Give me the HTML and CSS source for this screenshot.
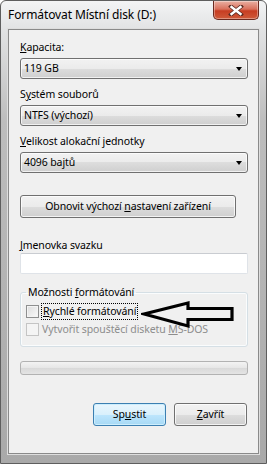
FILE: index.html
```html
<!DOCTYPE html>
<html lang="cs">
<head>
<meta charset="utf-8">
<title>Formátovat Místní disk (D:)</title>
<link rel="stylesheet" href="styles.css">
</head>
<body>
<div class="window">
  <div class="titlebar">
    <span class="title">Formátovat Místní disk (D:)</span>
    <div class="close">
      <svg width="16" height="11" viewBox="0 0 16 11"><path d="M3 1.5 L13 9.5 M13 1.5 L3 9.5" stroke="#5a2a22" stroke-width="4" stroke-linecap="square"/><path d="M3.5 2 L12.5 9 M12.5 2 L3.5 9" stroke="#fff" stroke-width="2.4" stroke-linecap="square"/></svg>
    </div>
  </div>
  <div class="client">
    <div class="label first"><u>K</u>apacita:</div>
    <div class="combo"><span>119 GB</span><i class="caret"></i></div>
    <div class="label">S<u>y</u>stém souborů</div>
    <div class="combo"><span>NTFS (výchozí)</span><i class="caret"></i></div>
    <div class="label"><u>V</u>elikost alokační jednotky</div>
    <div class="combo"><span>4096 bajtů</span><i class="caret"></i></div>
    <div class="btn restore"><span>Obnovit výchozí <u>n</u>astavení zařízení</span></div>
    <div class="label vol"><u>J</u>menovka svazku</div>
    <div class="input"></div>
    <fieldset class="group">
      <legend>Možnosti <u>f</u>ormátování</legend>
      <div class="check">
        <span class="box"></span><span class="focus"><u>R</u>ychlé formátování</span>
      </div>
      <div class="check disabled">
        <span class="box"></span><span>Vytvořit spouštěcí disketu <u>M</u>S-DOS</span>
      </div>
    </fieldset>
    <div class="progress"></div>
    <div class="actions">
      <div class="btn default"><span>Sp<u>u</u>stit</span></div>
      <div class="btn"><span><u>Z</u>avřít</span></div>
    </div>
  </div>
  <svg class="pointer" width="100" height="30" viewBox="0 0 100 30"><polygon points="3,14 47,3 47,8.5 91,8.5 91,19.5 47,19.5 47,26" fill="none" stroke="#000" stroke-width="3.2" stroke-linejoin="miter"/></svg>
</div>
</body>
</html>
```

FILE: styles.css
```css
* { box-sizing: border-box; }
html, body { margin: 0; padding: 0; background: #fff; }
body {
  font-family: "Noto Sans", "DejaVu Sans", sans-serif;
  font-size: 10.5px;
  letter-spacing: -0.1px;
  line-height: 15px;
  color: #000;
}
u { text-decoration: underline; text-underline-offset: 1px; }

.window {
  position: relative;
  width: 267px;
  height: 464px;
  border: 1px solid #5e5e5e;
  border-radius: 6px 6px 0 0;
  background: linear-gradient(#f3f4f5 0, #e2e3e4 28px, #bdbdbd 120px, #a9a9a9 100%);
  padding: 0 7px 9px;
  display: flex;
  flex-direction: column;
}

.titlebar {
  height: 28px;
  display: flex;
  justify-content: space-between;
  align-items: flex-start;
}
.title {
  margin-top: 6px;
  font-size: 12px;
  letter-spacing: -0.1px;
  line-height: 16px;
  color: #000;
}
.close {
  width: 46px;
  height: 19px;
  border: 1px solid #6b2a20;
  border-top: none;
  border-radius: 0 0 5px 5px;
  background: linear-gradient(#eab0a3 0, #d9705c 45%, #c73d22 55%, #cf5a3a 100%);
  box-shadow: inset 0 0 0 1px rgba(255,255,255,0.35);
  display: flex;
  align-items: center;
  justify-content: center;
}

.client {
  flex: 1;
  border: 1px solid #8a8a8a;
  box-shadow: 0 0 0 1px #dedede;
  background: #f0f0f0;
  padding: 10px 10px 0 11px;
  display: flex;
  flex-direction: column;
}

.label { height: 15px; margin-top: 8px; }
.label.first { margin-top: 0; }
.label.vol { margin-top: 20px; }

.combo {
  margin-top: 3px;
  height: 21px;
  border: 1px solid #707070;
  border-radius: 3px;
  background: linear-gradient(#f2f2f2 0, #ebebeb 50%, #dddddd 50%, #cfcfcf 100%);
  box-shadow: inset 0 0 0 1px rgba(255,255,255,0.7);
  display: flex;
  align-items: center;
  justify-content: space-between;
  padding: 0 5px 0 3px;
}
.caret {
  width: 0; height: 0;
  border-left: 3.5px solid transparent;
  border-right: 3.5px solid transparent;
  border-top: 4px solid #000;
}

.btn {
  height: 23px;
  border: 1px solid #707070;
  border-radius: 3px;
  background: linear-gradient(#f2f2f2 0, #ebebeb 50%, #dddddd 50%, #cfcfcf 100%);
  box-shadow: inset 0 0 0 1px rgba(255,255,255,0.75);
  display: flex;
  align-items: center;
  justify-content: center;
}
.btn.restore { margin-top: 22px; width: 216px; }

.input {
  height: 21px;
  border: 1px solid #dfe3e8;
  border-top-color: #c9ccd1;
  border-radius: 2px;
  background: #fff;
}

.group {
  margin: 11px 0 0;
  padding: 0 5px 9px;
  border: 1px solid #d5dfe5;
  border-radius: 3px;
  box-shadow: inset 0 0 0 1px #fafcfd;
  min-width: 0;
}
.group legend {
  padding: 0 2px;
  line-height: 15px;
}
.check {
  display: flex;
  align-items: center;
  height: 16px;
  margin-top: 3px;
}
.check + .check { margin-top: 2px; }
.box {
  width: 13px;
  height: 13px;
  border: 1px solid #8e8f8f;
  background: linear-gradient(135deg, #dcdcdc, #fbfbfb);
  box-shadow: inset 0 0 0 1px #f4f4f4;
  margin-right: 3px;
  flex: none;
}
.focus {
  outline: 1px dotted #000;
  padding: 0 1px;
}
.check.disabled { color: #8d8d8d; }
.check.disabled .box {
  border-color: #c4c4c4;
  background: #f4f4f4;
  box-shadow: none;
}

.progress {
  margin-top: 14px;
  height: 14px;
  border: 1px solid #b2b2b2;
  border-radius: 3px;
  background: linear-gradient(#f3f3f3 0, #e6e6e6 50%, #d9d9d9 51%, #e4e4e4 100%);
}

.actions {
  margin-top: 28px;
  display: flex;
  justify-content: flex-end;
  gap: 8px;
  padding-right: 1px;
}
.actions .btn { width: 73px; }
.btn.default {
  border-color: #3c7fb1;
  background: linear-gradient(#eaf6fd 0, #d9f0fc 50%, #bee6fd 50%, #a7d9f5 100%);
  box-shadow: inset 0 0 0 1px #cdeefd;
}

.pointer {
  position: absolute;
  left: 140px;
  top: 299px;
}
```
